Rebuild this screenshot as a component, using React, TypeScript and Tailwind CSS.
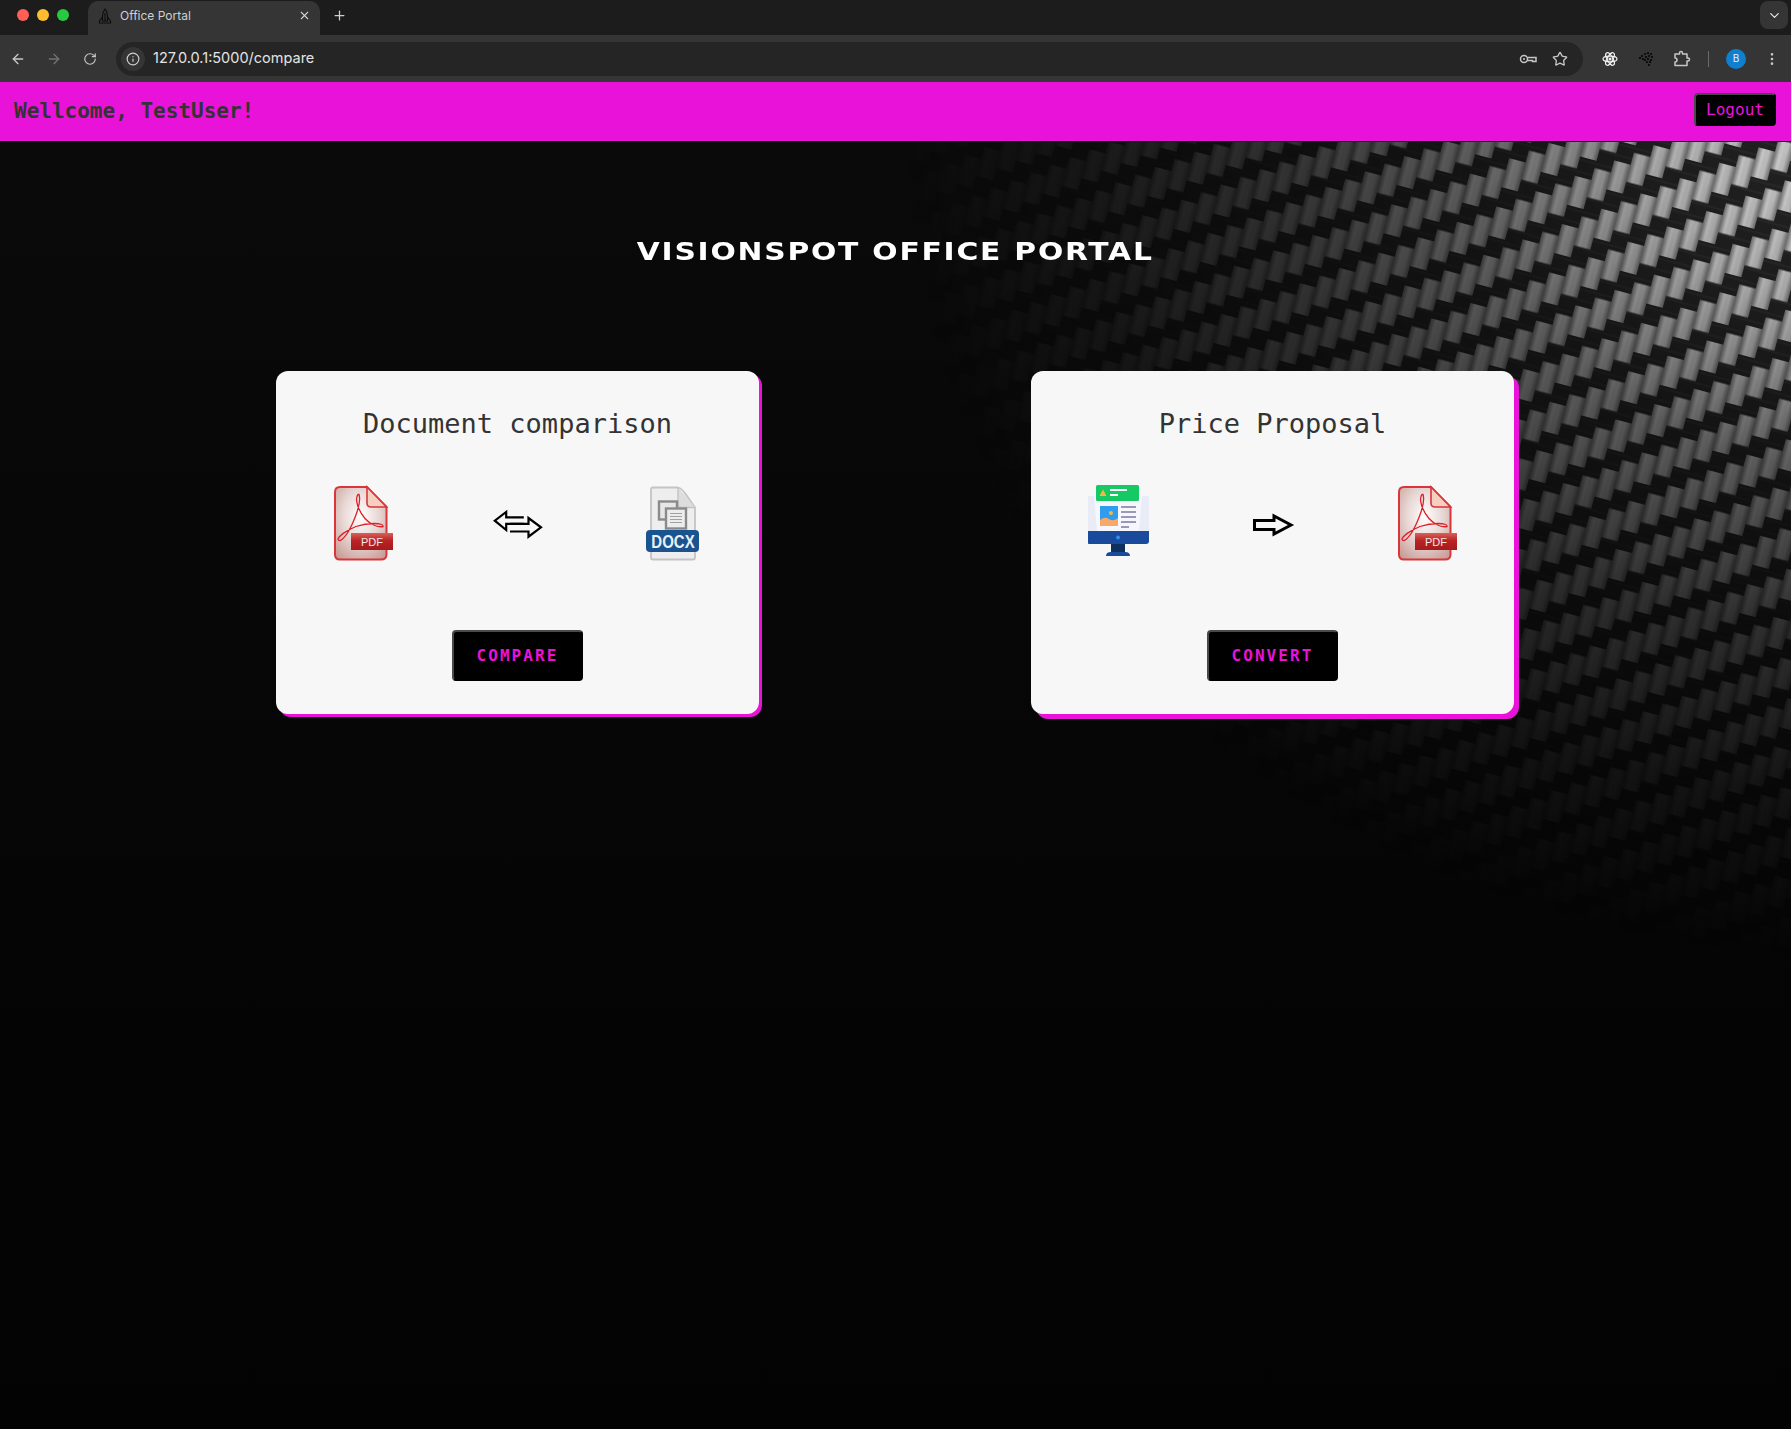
import React from "react";
import { ArrowLeft, ArrowRight, ChevronDown, Info, MoreVertical, Plus, RotateCw, Star, X } from "lucide-react";

function PdfIcon({ id }: { id: string }) {
  return (
    <svg width="60" height="76" viewBox="0 -0.500 60 76">
      <defs>
        <radialGradient id={`${id}-body`} cx="50%" cy="40%" r="70%">
          <stop offset="0%" stopColor="#ffffff" />
          <stop offset="50%" stopColor="#e8d8d5" />
          <stop offset="100%" stopColor="#c99f99" />
        </radialGradient>
        <linearGradient id={`${id}-banner`} x1="0" y1="0" x2="0" y2="1">
          <stop offset="0%" stopColor="#d9605a" />
          <stop offset="45%" stopColor="#b92326" />
          <stop offset="100%" stopColor="#a51a1d" />
        </linearGradient>
      </defs>
      <path d="M6 1.500H33L52.500 21.500V69Q52.500 74 47 74H6Q1 74 1 69V6.500Q1 1.500 6 1.500Z" fill={`url(#${id}-body)`} stroke="#d9363c" strokeWidth="2" />
      <path d="M33 1.500L52.500 21.500H37Q33 21.500 33 17.500Z" fill="#f6cfc0" stroke="#d9363c" strokeWidth="1.600" />
      <path
        d="M24 9C20 14 25 26 31 33C37 40 45 42 49 41C50 37 34 37 22 41C12 45 4 51 4 54C6 58 13 50 18 39C23 28 27 15 25 9Z"
        fill="none"
        stroke="#dd2029"
        strokeWidth="1.300"
      />
      <rect x="17" y="47.500" width="42" height="17" fill={`url(#${id}-banner)`} />
      <text x="38" y="60.500" textAnchor="middle" fill="#f5e6e4" fontSize="11" fontFamily="Liberation Sans, sans-serif">
        PDF
      </text>
    </svg>
  );
}

function DocxIcon() {
  return (
    <svg width="54" height="76" viewBox="0 -0.500 54 76">
      <path d="M7 2H32Q36 3 40 9L49 22V72Q49 74 47 74H7Q5 74 5 72V4Q5 2 7 2Z" fill="#eeeeee" stroke="#c4c4c4" strokeWidth="1.800" />
      <path d="M32 2V18Q32 22 36 22H49" fill="#dddddd" stroke="#c4c4c4" strokeWidth="1.400" />
      <rect x="13" y="16" width="18" height="18" fill="#e6e6e6" stroke="#8a8a8a" strokeWidth="2.400" />
      <rect x="20" y="23" width="20" height="20" fill="#ececec" stroke="#8a8a8a" strokeWidth="2.400" />
      <path d="M24 28H36M24 31H36M24 34H36M24 37H36" stroke="#a0a0a0" strokeWidth="1.200" />
      <rect x="0" y="44.500" width="53" height="22" rx="4" fill="#1a5490" />
      <text transform="translate(27 62) scale(1 1.200)" textAnchor="middle" fill="#e9f0f7" fontSize="15" fontWeight="700" fontFamily="Liberation Sans, sans-serif">
        DOCX
      </text>
    </svg>
  );
}

function MonitorIcon() {
  return (
    <svg width="62" height="76" viewBox="1 0 62 76">
      <rect x="0" y="11" width="62" height="38" rx="2" fill="#e9ebf7" />
      <path d="M7 11H55L52 46H10Z" fill="#f6f7fc" />
      <path d="M0 46H62V56Q62 59 59 59H3Q0 59 0 56Z" fill="#1a4a9c" />
      <circle cx="31" cy="52.500" r="2" fill="#2f8cf0" />
      <rect x="24" y="59" width="14" height="8" fill="#0f2f5f" />
      <path d="M19 71Q19 67 24 67H38Q43 67 43 71Z" fill="#1a4a9c" />
      <rect x="9" y="0" width="43" height="16" rx="1.500" fill="#17c964" />
      <path d="M16 4.500L19.500 11H12.500Z" fill="#f5b83d" />
      <path d="M23 5H40M23 10H31" stroke="#ffffff" strokeWidth="1.800" />
      <rect x="13" y="21" width="18" height="20" fill="#2f9cf0" />
      <path d="M13 35Q18 31 22 34T31 33V41H13Z" fill="#f8a868" />
      <circle cx="24" cy="28" r="2" fill="#f5b83d" />
      <path d="M34 22H49M34 27H49M34 32H49M34 37H49M34 42H42" stroke="#9a98b8" strokeWidth="1.800" />
    </svg>
  );
}

function SwapArrows() {
  return (
    <svg width="50" height="76" viewBox="0 0 50 76" fill="none" stroke="#000000" strokeWidth="2.200">
      <path d="M30.800 32.300H13.200V27L1.800 35.700L13.200 45V38.800H30.800" />
      <path d="M17 38.800H35.500V33L48 42.300L35.500 51.700V46.500H17" />
    </svg>
  );
}

function RightArrow() {
  return (
    <svg width="50" height="76" viewBox="0 0 50 76" fill="none" stroke="#000000" strokeWidth="3">
      <path d="M6.500 35.500H26V31L43 40L26 49V44.500H6.500Z" />
    </svg>
  );
}

function OutsetButton({ children, className }: { children: React.ReactNode; className: string }) {
  return (
    <button className={`bg-black text-[#e912d9] border-2 border-t-[#4a4a4a] border-l-[#4a4a4a] border-r-black border-b-black rounded-[4px] font-['DejaVu_Sans_Mono',monospace] ${className}`}>
      {children}
    </button>
  );
}

function Card({
  title,
  action,
  shadow,
  icons,
}: {
  title: string;
  action: string;
  shadow: string;
  icons: React.ReactNode[];
}) {
  return (
    <div className={`w-[483px] h-[343px] bg-[#f7f7f7] rounded-[12px] flex flex-col items-center pt-[37px] ${shadow}`}>
      <h2 className="text-[27px] leading-[32px] text-[#333333] font-['DejaVu_Sans_Mono',monospace]">{title}</h2>
      <div className="mt-[45px] w-full pl-[11px] pr-[9px] grid grid-cols-3 h-[76px]">
        {icons.map((icon, i) => (
          <div key={i} className="flex justify-center">
            {icon}
          </div>
        ))}
      </div>
      <OutsetButton className="mt-[69px] w-[131px] h-[51px] text-[16px] font-bold tracking-[2.1px]">{action}</OutsetButton>
    </div>
  );
}

function CarbonBackground() {
  return (
    <svg className="absolute inset-0 w-full h-full" width="1791" height="1288" viewBox="0 0 1791 1288" preserveAspectRatio="none">
      <defs>
        <linearGradient id="tile" x1="0" y1="0" x2="1" y2="0">
          <stop offset="0%" stopColor="#7c7c7c" />
          <stop offset="30%" stopColor="#d8d8d8" />
          <stop offset="70%" stopColor="#c6c6c6" />
          <stop offset="100%" stopColor="#7a7a7a" />
        </linearGradient>
        {/* 2/2 twill: four columns, each one stepping 12.5px up from the last */}
        <pattern id="weave" width="68" height="50" patternUnits="userSpaceOnUse" patternTransform="rotate(15)">
          <rect width="68" height="50" fill="#242424" />
          <path d="M0 8H68M0 20H68M0 33H68M0 44H68" stroke="#343434" strokeWidth="1" />
          <rect x="0" y="0" width="17" height="30" fill="url(#tile)" />
          <rect x="17" y="37.500" width="17" height="12.500" fill="url(#tile)" />
          <rect x="17" y="0" width="17" height="17.500" fill="url(#tile)" />
          <rect x="34" y="25" width="17" height="25" fill="url(#tile)" />
          <rect x="34" y="0" width="17" height="5" fill="url(#tile)" />
          <rect x="51" y="12.500" width="17" height="30" fill="url(#tile)" />
          <path d="M6 0V30M11 0V30M23 0V17.500M28 37.500V50M40 25V50M45 0V5M57 12.500V42.500M62 12.500V42.500" stroke="#f4f4f4" strokeOpacity="0.22" strokeWidth="1" />
        </pattern>
        <radialGradient id="glow" gradientUnits="userSpaceOnUse" cx="0" cy="0" r="1" gradientTransform="translate(1860 0) scale(960 820)">
          <stop offset="0%" stopColor="#ffffff" stopOpacity="1" />
          <stop offset="20%" stopColor="#ffffff" stopOpacity="0.8" />
          <stop offset="40%" stopColor="#ffffff" stopOpacity="0.42" />
          <stop offset="60%" stopColor="#ffffff" stopOpacity="0.2" />
          <stop offset="80%" stopColor="#ffffff" stopOpacity="0.07" />
          <stop offset="100%" stopColor="#ffffff" stopOpacity="0" />
        </radialGradient>
        <mask id="fade">
          <rect width="1791" height="1288" fill="url(#glow)" />
        </mask>
        <filter id="soft">
          <feGaussianBlur stdDeviation="0.6" />
        </filter>
      </defs>
      <rect width="1791" height="1288" fill="url(#weave)" mask="url(#fade)" filter="url(#soft)" />
    </svg>
  );
}

function KeyIcon() {
  return (
    <svg width="18" height="18" viewBox="0 0 18 18" fill="none" stroke="#c7c7c7" strokeWidth="1.500">
      <circle cx="5" cy="9" r="3.500" />
      <path d="M8.500 7.500H17V11.500H13.500V10.500H8.500" />
      <circle cx="5" cy="9" r="1" fill="#c7c7c7" stroke="none" />
    </svg>
  );
}

function ReactExtIcon() {
  return (
    <svg width="16" height="16" viewBox="0 0 16 16" fill="none" stroke="#f0f0f0" strokeWidth="1.200">
      <ellipse cx="8" cy="8" rx="7" ry="2.800" />
      <ellipse cx="8" cy="8" rx="7" ry="2.800" transform="rotate(60 8 8)" />
      <ellipse cx="8" cy="8" rx="7" ry="2.800" transform="rotate(120 8 8)" />
      <circle cx="8" cy="8" r="1.500" fill="#f0f0f0" stroke="none" />
    </svg>
  );
}

function DotsExtIcon() {
  const dots = [
    [4, 6], [7, 4], [10, 3], [13, 4], [2, 8], [5, 9], [8, 7], [11, 6], [14, 7],
    [7, 10], [10, 9], [13, 10], [9, 12], [12, 12], [11, 15],
  ];
  return (
    <svg width="16" height="18" viewBox="0 0 16 18" fill="#050505">
      {dots.map(([x, y], i) => (
        <circle key={i} cx={x} cy={y} r="1.100" />
      ))}
    </svg>
  );
}

function PuzzleIcon() {
  return (
    <svg width="18" height="18" viewBox="0 0 18 18" fill="none" stroke="#c7c7c7" strokeWidth="1.500" strokeLinejoin="round">
      <path d="M2 4H6.500V3Q6.500 1.500 8 1.500T9.500 3V4H14V8H15Q16.500 8 16.500 9.500T15 11H14V15.500H2V12Q4 12 4 10T2 8Z" />
    </svg>
  );
}

function TabFavicon() {
  return (
    <svg width="14" height="16" viewBox="0 0 14 16" fill="none" stroke="#0c0c0c" strokeWidth="1.100">
      <path d="M7 1Q4.500 4 4.500 8V13H9.500V8Q9.500 4 7 1Z" />
      <path d="M4.500 9L1.500 13V15H12.500V13L9.500 9M7 5V13" />
    </svg>
  );
}

export default function App() {
  return (
    <div className="w-full min-h-[1429px] flex flex-col bg-[#040404] font-['Inter',sans-serif]">
      {/* browser tab strip */}
      <div className="h-[35px] bg-[#1c1c1c] flex items-end">
        <div className="w-[88px] h-full flex items-center gap-2 pl-[17px] pb-[5px]">
          <span className="h-3 w-3 rounded-full bg-[#ff5f57]" />
          <span className="h-3 w-3 rounded-full bg-[#febc2e]" />
          <span className="h-3 w-3 rounded-full bg-[#28c840]" />
        </div>
        <div className="w-[232px] h-[34px] bg-[#353535] rounded-t-[10px] flex items-center pl-[10px] pr-[9px] pb-[5px]">
          <TabFavicon />
          <span className="ml-[8px] text-[12px] text-[#d0d0d0] flex-1">Office Portal</span>
          <X size={13} className="text-[#d0d0d0]" />
        </div>
        <div className="w-[39px] h-full flex items-center justify-center pb-[5px]">
          <Plus size={15} className="text-[#d0d0d0]" />
        </div>
        <div className="flex-1" />
        <div className="w-[28px] h-[28px] mb-[6px] mr-[3px] rounded-lg bg-[#353535] flex items-center justify-center">
          <ChevronDown size={15} className="text-[#e3e3e3]" />
        </div>
      </div>

      {/* browser toolbar */}
      <div className="h-[47px] bg-[#353535] flex items-center">
        <div className="w-[36px] flex justify-center">
          <ArrowLeft size={16} className="text-[#c7c7c7]" />
        </div>
        <div className="w-[36px] flex justify-center">
          <ArrowRight size={16} className="text-[#737373]" />
        </div>
        <div className="w-[36px] flex justify-center">
          <RotateCw size={14} className="text-[#c7c7c7]" />
        </div>
        <div className="ml-[8px] w-[1467px] h-[34px] rounded-full bg-[#252525] flex items-center pl-[5px] pr-[7px]">
          <div className="h-6 w-6 rounded-full bg-[#353535] flex items-center justify-center">
            <Info size={14} className="text-[#d0d0d0]" />
          </div>
          <span className="ml-[8px] mb-[1px] text-[14.5px] text-[#e3e3e3] flex-1">127.0.0.1:5000/compare</span>
          <div className="w-[32px] flex justify-center">
            <KeyIcon />
          </div>
          <div className="w-[32px] flex justify-center">
            <Star size={16} className="text-[#c7c7c7]" />
          </div>
        </div>
        <div className="ml-[11px] w-[32px] flex justify-center">
          <ReactExtIcon />
        </div>
        <div className="ml-[4px] w-[32px] flex justify-center">
          <DotsExtIcon />
        </div>
        <div className="ml-[4px] w-[32px] flex justify-center">
          <PuzzleIcon />
        </div>
        <div className="ml-[10px] w-px h-[16px] bg-[#6a6a6a]" />
        <div className="ml-[17px] h-5 w-5 rounded-full bg-[#0f7fcf] flex items-center justify-center text-[10px] text-[#e8f2fb]">B</div>
        <div className="ml-[18px]">
          <MoreVertical size={16} className="text-[#c7c7c7]" />
        </div>
      </div>

      {/* site header */}
      <header className="h-[60px] bg-[#e912d9] border-b border-black flex items-center justify-between pl-[14px] pr-[15px] font-['DejaVu_Sans_Mono',monospace]">
        <span className="text-[21px] font-bold text-[#333333]">Wellcome, TestUser!</span>
        <OutsetButton className="w-[82px] h-[33px] mb-[4px] text-[16px]">Logout</OutsetButton>
      </header>

      <main className="relative flex-1 overflow-hidden bg-linear-to-b from-[#0a0a0a] to-[#030303]">
        <CarbonBackground />
        <div className="relative pt-[95px] flex flex-col items-center">
          <h1 className="text-[25px] leading-[30px] font-bold tracking-[1.5px] text-white font-['DejaVu_Sans',sans-serif] scale-x-[1.19]">
            VISIONSPOT OFFICE PORTAL
          </h1>
          <div className="mt-[104px] pr-[1px] flex justify-center gap-[272px]">
            <Card
              title="Document comparison"
              action="COMPARE"
              shadow="shadow-[3px_3px_0_#e912d9]"
              icons={[<PdfIcon key="pdf" id="pdf-a" />, <SwapArrows key="swap" />, <DocxIcon key="docx" />]}
            />
            <Card
              title="Price Proposal"
              action="CONVERT"
              shadow="shadow-[5px_5px_0_#e912d9]"
              icons={[<MonitorIcon key="monitor" />, <RightArrow key="arrow" />, <PdfIcon key="pdf" id="pdf-b" />]}
            />
          </div>
        </div>
      </main>
    </div>
  );
}
